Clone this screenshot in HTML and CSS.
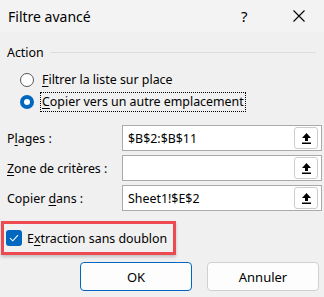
FILE: index.html
```html
<!DOCTYPE html>
<html lang="fr">

<head>
    <meta charset="UTF-8" />
    <meta name="viewport" content="width=device-width, initial-scale=1.0" />
    <title>Filtre avancé</title>
    <link rel="stylesheet" href="styles.css">
</head>

<body>
    <div class="titlebar">
        <span class="title">Filtre avancé</span>
        <span class="help">?</span>
        <span class="close">
            <svg width="12" height="12" viewBox="0 0 12 12"><path d="M0.5 0.5 L11.5 11.5 M11.5 0.5 L0.5 11.5" stroke="#000" stroke-width="1.1" fill="none"/></svg>
        </span>
    </div>

    <div class="dialog">
        <!-- Action group -->
        <div class="group-title">
            <span>Action</span>
            <span class="group-line"></span>
        </div>

        <div class="radios">
            <label class="radio-row">
                <span class="radio"></span>
                <span class="radio-text"><u>F</u>iltrer la liste sur place</span>
            </label>
            <label class="radio-row">
                <span class="radio checked"></span>
                <span class="radio-text focused"><u>C</u>opier vers un autre emplacement</span>
            </label>
        </div>

        <!-- Ranges -->
        <div class="fields">
            <span class="field-label">P<u>l</u>ages :</span>
            <div class="range-input">
                <span class="range-value">$B$2:$B$11</span>
                <span class="range-btn">
                    <svg width="9" height="11" viewBox="0 0 9 11"><path d="M4.5 0 L9 5 L6 5 L6 8 L3 8 L3 5 L0 5 Z M0 9.5 H9 V11 H0 Z" fill="#000"/></svg>
                </span>
            </div>

            <span class="field-label"><u>Z</u>one de critères :</span>
            <div class="range-input">
                <span class="range-value"></span>
                <span class="range-btn">
                    <svg width="9" height="11" viewBox="0 0 9 11"><path d="M4.5 0 L9 5 L6 5 L6 8 L3 8 L3 5 L0 5 Z M0 9.5 H9 V11 H0 Z" fill="#000"/></svg>
                </span>
            </div>

            <span class="field-label">Copier <u>d</u>ans :</span>
            <div class="range-input">
                <span class="range-value">Sheet1!$E$2</span>
                <span class="range-btn">
                    <svg width="9" height="11" viewBox="0 0 9 11"><path d="M4.5 0 L9 5 L6 5 L6 8 L3 8 L3 5 L0 5 Z M0 9.5 H9 V11 H0 Z" fill="#000"/></svg>
                </span>
            </div>
        </div>

        <!-- Unique records -->
        <div class="highlight">
            <span class="checkbox">
                <svg width="10" height="8" viewBox="0 0 10 8"><path d="M1 4.2 L3.8 6.8 L9 1.2" fill="none" stroke="#fff" stroke-width="1.1"/></svg>
            </span>
            <span>E<u>x</u>traction sans doublon</span>
        </div>

        <div class="buttons">
            <button class="btn default">OK</button>
            <button class="btn">Annuler</button>
        </div>
    </div>
</body>

</html>
```

FILE: styles.css
```css
body {
    margin: 0;
    width: 324px;
    height: 297px;
    overflow: hidden;
    font-family: "Noto Sans", "Open Sans", sans-serif;
    font-size: 12.4px;
    color: #000;
    background-color: #f0f0f0;
}

u {
    text-decoration-thickness: 1px;
    text-underline-offset: 2px;
}

.titlebar {
    height: 32px;
    display: flex;
    align-items: center;
    background-color: #f3f3f3;
}

.title {
    flex: 1;
    padding-left: 8px;
    font-size: 14px;
}

.help {
    width: 12px;
    margin-right: 40px;
    font-size: 15px;
}

.close {
    display: flex;
    margin-right: 19px;
}

.dialog {
    padding: 11px 3px 0 7px;
}

.group-title {
    display: flex;
    align-items: center;
    height: 18px;
}

.group-line {
    flex: 1;
    height: 1px;
    margin-left: 6px;
    margin-right: 5px;
    background-color: #dcdcdc;
}

.radios {
    margin-top: 8px;
}

.radio-row {
    display: flex;
    align-items: center;
    height: 22px;
    margin-left: 13px;
}

.radio {
    width: 12px;
    height: 12px;
    border: 1px solid #555;
    border-radius: 50%;
    background-color: #fff;
    margin-right: 6px;
}

.radio.checked {
    width: 6px;
    height: 6px;
    border: 4px solid #0067c0;
    background-color: #fff;
}

.radio-text {
    padding: 0 1px;
    line-height: 18px;
    border: 1px solid transparent;
}

.radio-text.focused {
    border: 1px dotted #000;
}

.fields {
    display: grid;
    grid-template-columns: 115px 200px;
    row-gap: 4px;
    align-items: center;
    margin-top: 12px;
}

.range-input {
    height: 24px;
    display: flex;
    align-items: center;
    border: 1px solid #aaa;
    background-color: #fff;
}

.range-value {
    flex: 1;
    padding-left: 5px;
}

.range-btn {
    width: 22px;
    height: 20px;
    margin-right: 3px;
    display: flex;
    align-items: center;
    justify-content: center;
    border: 1px solid #ccc;
    border-radius: 3px;
    background-color: #fff;
}

.highlight {
    display: flex;
    align-items: center;
    gap: 5px;
    width: fit-content;
    height: 28px;
    margin: 10px 0 0 -6px;
    padding: 0 6px 0 2px;
    white-space: nowrap;
    border: 3px solid #ec4a50;
    box-shadow: 0 2px 3px rgba(0, 0, 0, 0.2);
}

.checkbox {
    width: 16px;
    height: 16px;
    display: flex;
    align-items: center;
    justify-content: center;
    border-radius: 3px;
    background-color: #0067c0;
}

.buttons {
    display: flex;
    justify-content: flex-end;
    gap: 15px;
    margin-top: 7px;
    padding-right: 2px;
}

.btn {
    width: 112px;
    height: 29px;
    font-family: inherit;
    font-size: 13px;
    color: #000;
    background-color: #fdfdfd;
    border: 1px solid #d0d0d0;
    border-radius: 4px;
}

.btn.default {
    border-color: #0067c0;
}
```
